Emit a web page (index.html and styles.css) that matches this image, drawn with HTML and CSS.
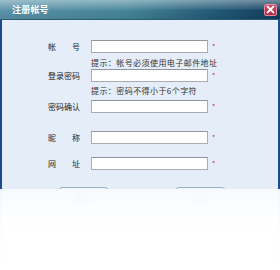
FILE: index.html
```html
<!DOCTYPE html>
<html lang="zh-CN">
<head>
  <meta charset="UTF-8">
  <title>注册帐号</title>
  <link rel="stylesheet" href="styles.css">
</head>
<body>
  <div class="window">
    <div class="titlebar">
      <span class="title">注册帐号</span>
      <span class="close">
        <svg width="9" height="9" viewBox="0 0 9 9">
          <path d="M1 1L8 8M8 1L1 8" stroke="#fff" stroke-width="1.8"/>
        </svg>
      </span>
    </div>

    <div class="content">
      <div class="row">
        <label class="name">帐号</label>
        <input type="text" class="box">
        <span class="star">*</span>
      </div>
      <div class="hint first">提示：帐号必须使用电子邮件地址</div>

      <div class="row">
        <label class="name">登录密码</label>
        <input type="password" class="box">
        <span class="star">*</span>
      </div>
      <div class="hint second">提示：密码不得小于6个字符</div>

      <div class="row r3">
        <label class="name">密码确认</label>
        <input type="password" class="box">
        <span class="star">*</span>
      </div>

      <div class="row r4">
        <label class="name">昵称</label>
        <input type="text" class="box">
        <span class="star">*</span>
      </div>

      <div class="row r5">
        <label class="name">网址</label>
        <input type="text" class="box">
        <span class="star">*</span>
      </div>

      <div class="buttons">
        <button class="btn">确定</button>
        <button class="btn">取消</button>
      </div>
    </div>

    <div class="fade"></div>
  </div>
</body>
</html>
```

FILE: styles.css
```css
html, body {
  margin: 0;
  padding: 0;
  background: #fff;
}
body {
  font-family: "Noto Sans CJK SC", "DejaVu Sans", sans-serif;
  width: 280px;
  height: 270px;
  overflow: hidden;
}
.window {
  position: relative;
  width: 280px;
  height: 270px;
  background: #e5eef8;
  border-left: 2px solid #1c4a94;
  border-right: 2px solid #1c4a94;
  box-sizing: border-box;
}
.titlebar {
  height: 19px;
  margin: 0 -2px;
  display: flex;
  align-items: center;
  justify-content: space-between;
  padding: 0 3px 0 12px;
  background: linear-gradient(to bottom, rgba(255,255,255,0.4) 0, rgba(255,255,255,0.1) 45%, rgba(0,0,0,0) 55%, rgba(0,0,0,0.08) 100%),
              linear-gradient(to right, #5a93a9 0%, #468698 45%, #245c78 75%, #103c5b 100%);
  border-bottom: 1px solid #2a5c78;
}
.title {
  color: #fff;
  font-size: 9px;
  font-weight: bold;
  line-height: 19px;
  letter-spacing: 0.2px;
}
.close {
  width: 13px;
  height: 12px;
  display: flex;
  align-items: center;
  justify-content: center;
  background: linear-gradient(#d24a64, #b02a44);
  border: 1px solid #e38a9a;
  border-radius: 2px;
  box-sizing: border-box;
}
.content {
  padding: 20px 0 0 46px;
}
.row {
  display: flex;
  align-items: center;
  height: 13px;
}
.name {
  width: 32px;
  font-size: 8px;
  color: #222;
  text-align-last: justify;
  white-space: nowrap;
}
.box {
  width: 117px;
  height: 13px;
  margin: 0 0 0 11px;
  padding: 0;
  border: 1px solid #a8adb4;
  border-top-color: #8f959c;
  background: #fff;
  box-sizing: border-box;
}
.star {
  color: #e0103a;
  font-size: 7px;
  margin-left: 4px;
  line-height: 13px;
}
.hint {
  margin-left: 43px;
  font-size: 8px;
  line-height: 13px;
  letter-spacing: 0.43px;
  color: #333;
  white-space: nowrap;
}
.hint.first {
  margin-top: 3px;
}
.hint.second {
  margin-top: 2px;
}
.r3 {
  margin-top: 3px;
}
.r4 {
  margin-top: 18px;
}
.r5 {
  margin-top: 13px;
}
.buttons {
  display: flex;
  margin: 17px 0 0 11px;
  gap: 68px;
}
.btn {
  width: 49px;
  height: 22px;
  font-family: inherit;
  font-size: 8px;
  color: #333;
  background: linear-gradient(#f4f8fc, #d6e3f0);
  border: 1px solid #98b0c8;
  border-radius: 3px;
}
.fade {
  position: absolute;
  left: -2px;
  right: -2px;
  top: 189px;
  bottom: 0;
  background: linear-gradient(to bottom, rgba(248,251,253,0.97), rgba(255,255,255,0.99) 45%, #fff);
}
```
